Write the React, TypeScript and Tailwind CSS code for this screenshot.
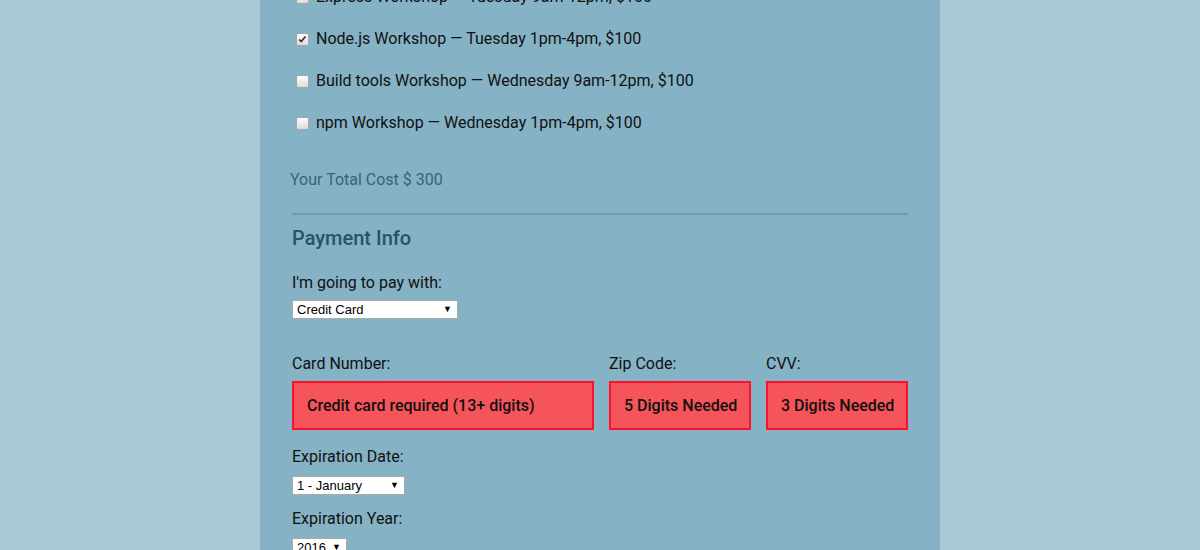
import React from "react";

const font = { fontFamily: "Roboto, 'Noto Sans', sans-serif" };

function Checkbox({ checked }: { checked?: boolean }) {
  return (
    <span className="relative inline-block w-[13px] h-[13px] rounded-[2px] border border-[#a6a6a6] bg-gradient-to-b from-[#fcfcfc] to-[#dcdcdc] shrink-0">
      {checked && (
        <svg viewBox="0 0 13 13" className="absolute inset-0 w-[11px] h-[11px]">
          <path d="M2.5 6.5 L5 9 L10 3" stroke="#333" strokeWidth="2" fill="none" />
        </svg>
      )}
    </span>
  );
}

function FakeSelect({ value, width }: { value: string; width: string }) {
  return (
    <div
      className={`${width} h-[19px] bg-white border border-[#a9a9a9] flex items-center justify-between pl-[4px] pr-[5px] text-[13px] text-black`}
      style={{ fontFamily: "'Liberation Sans', Arial, sans-serif" }}
    >
      <span className="leading-none">{value}</span>
      <span className="text-[9px] leading-none">▼</span>
    </div>
  );
}

const workshops = [
  { t: "Express Workshop — Tuesday 9am-12pm, $100", c: false },
  { t: "Node.js Workshop — Tuesday 1pm-4pm, $100", c: true },
  { t: "Build tools Workshop — Wednesday 9am-12pm, $100", c: false },
  { t: "npm Workshop — Wednesday 1pm-4pm, $100", c: false },
];

export default function App() {
  return (
    <div className="w-[1200px] h-[550px] overflow-hidden bg-[#a9c9d6]" style={font}>
      <div className="w-[680px] mx-auto h-full bg-[#85b2c5] pl-[32px] pr-[32px] flex flex-col">
        <div className="mt-[-24px] pl-[4px]">
          {workshops.map((w) => (
            <div key={w.t} className="h-[42px] flex items-center gap-[7px] text-[16px] text-[#111]">
              <Checkbox checked={w.c} />
              <span>{w.t}</span>
            </div>
          ))}
        </div>
        <div className="mt-[24px] ml-[-2px] h-[24px] leading-[24px] text-[16px] text-[#3d6275]">
          Your Total Cost $ 300
        </div>
        <div className="mt-[21px] h-[2px] bg-[#6a9bb1] shrink-0" />
        <div className="mt-[11px] h-[24px] leading-[24px] text-[20px] font-medium text-[#285369]">
          Payment Info
        </div>
        <div className="mt-[21px] h-[24px] leading-[24px] text-[16px] text-[#111]">
          I'm going to pay with:
        </div>
        <div className="mt-[5px]">
          <FakeSelect value="Credit Card" width="w-[166px]" />
        </div>
        <div className="mt-[33px] flex gap-[15px]">
          {[
            { l: "Card Number:", p: "Credit card required (13+ digits)", w: "w-[302px]" },
            { l: "Zip Code:", p: "5 Digits Needed", w: "w-[142px]" },
            { l: "CVV:", p: "3 Digits Needed", w: "w-[142px]" },
          ].map((f) => (
            <div key={f.l} className={`${f.w} flex flex-col`}>
              <div className="h-[24px] leading-[24px] text-[16px] text-[#111]">{f.l}</div>
              <div className="mt-[5px] h-[49px] border-2 border-[#ff1028] bg-[#f5555a] flex items-center pl-[13px] text-[16px] font-medium text-[#111] whitespace-nowrap overflow-hidden">
                {f.p}
              </div>
            </div>
          ))}
        </div>
        <div className="mt-[15px] h-[24px] leading-[24px] text-[16px] text-[#111]">Expiration Date:</div>
        <div className="mt-[7px]">
          <FakeSelect value="1 - January" width="w-[113px]" />
        </div>
        <div className="mt-[12px] h-[24px] leading-[24px] text-[16px] text-[#111]">Expiration Year:</div>
        <div className="mt-[7px]">
          <FakeSelect value="2016" width="w-[55px]" />
        </div>
      </div>
    </div>
  );
}
